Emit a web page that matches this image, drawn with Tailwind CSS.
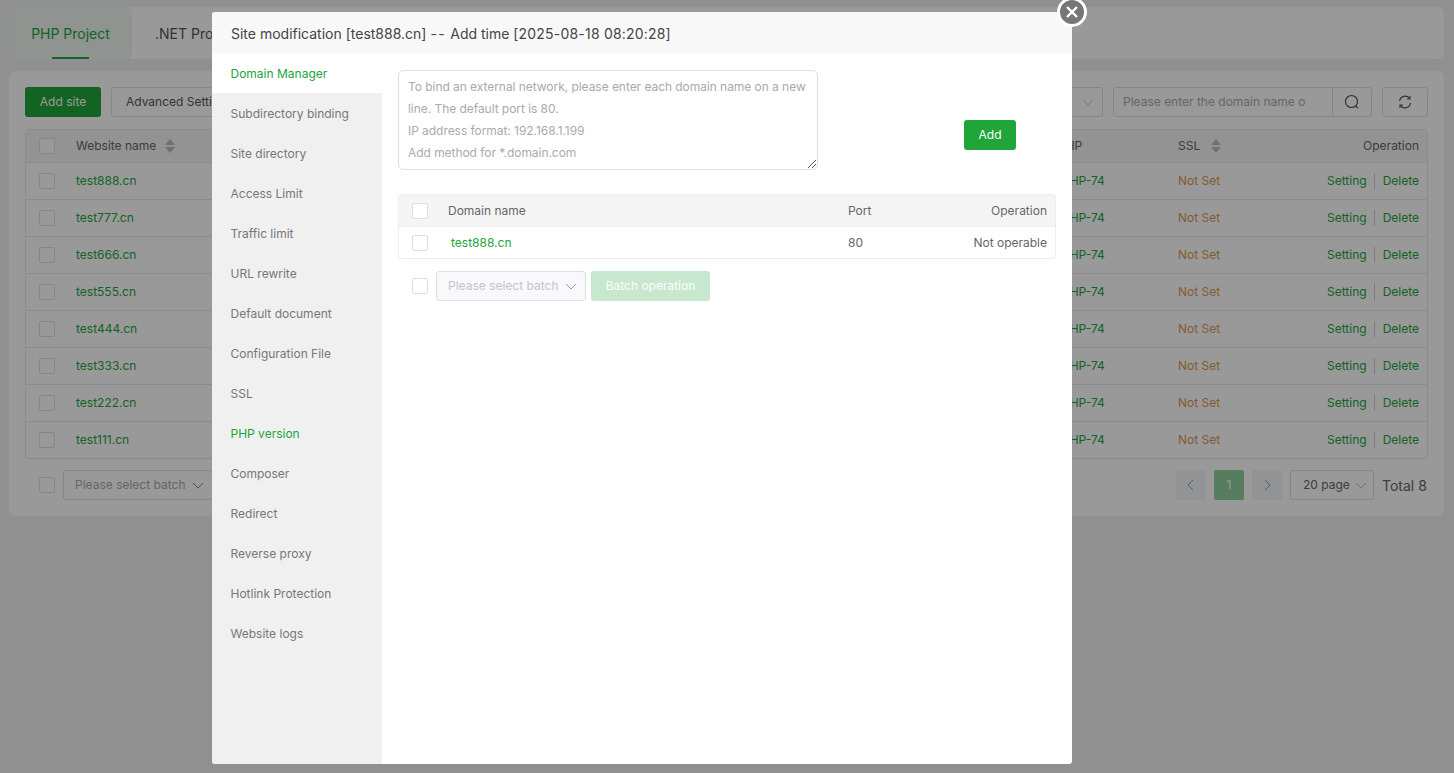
<!DOCTYPE html>
<html lang="en">
<head>
    <meta charset="UTF-8">
    <title>Website</title>
    <script src="https://cdn.jsdelivr.net/npm/@tailwindcss/browser@4"></script>
</head>
<body class="h-[773px] overflow-hidden bg-[#f0f0f0] font-['Inter','Liberation_Sans',sans-serif] text-[12px] text-[#666]">
    <!-- Page behind the dialog -->
    <div class="px-[9px] pt-[7px]">
        <div class="flex h-[52px] w-[1435px] rounded-md bg-white text-[14px]">
            <div class="relative flex w-[123px] items-center justify-center rounded-md bg-[#f0f7f1] text-[#20a53a]">
                PHP Project
                <span class="absolute bottom-0 left-[43px] h-[2px] w-[37px] bg-[#20a53a]"></span>
            </div>
            <div class="flex items-center pl-[23px] text-[#555]">.NET Project</div>
        </div>
        <div class="mt-[12px] h-[445px] w-[1435px] rounded-md bg-white px-[16px] pt-[16px]">
            <div class="flex h-[30px] items-center">
                <button class="h-[30px] w-[76px] rounded-[3px] bg-[#20a53a] text-white">Add site</button>
                <button class="ml-[10px] h-[30px] w-[130px] rounded-[3px] border border-[#dcdfe6] text-left pl-[14px] text-[#555]">Advanced Settings</button>
                <div class="ml-auto flex h-[30px] w-[30px] items-center justify-center rounded-r-[3px] border border-l-0 border-[#dcdfe6]">
                    <svg width="12" height="12" viewBox="0 0 12 12" fill="none" stroke="#c0c4cc"><path d="M1 4l5 5 5-5"/></svg>
                </div>
                <div class="ml-[10px] flex h-[30px] w-[259px] rounded-[3px] border border-[#dcdfe6]">
                    <div class="flex w-[218px] items-center whitespace-nowrap pl-[9px] text-[#aaa]">Please enter the domain name o</div>
                    <div class="flex flex-1 items-center justify-center border-l border-[#dcdfe6]">
                        <svg width="16" height="16" viewBox="0 0 16 16" fill="none" stroke="#555" stroke-width="1.2"><circle cx="7.5" cy="7.5" r="6"/><path d="M11.8 12l2.4 2.4"/></svg>
                    </div>
                </div>
                <div class="ml-[10px] flex h-[30px] w-[46px] items-center justify-center rounded-[3px] border border-[#dcdfe6]">
                    <svg width="14" height="14" viewBox="0 0 14 14" fill="none" stroke="#555" stroke-width="1.2"><path d="M1.6 6A5.5 5.5 0 0 1 11.6 3.6M12.4 8A5.5 5.5 0 0 1 2.4 10.4"/><path d="M12 1v3H9M2 13v-3h3"/></svg>
                </div>
            </div>
            <div id="sites" class="mt-[12px] rounded-[3px] border border-[#e8e8e8]">
                <div class="flex h-[32px] items-center bg-[#f5f5f5]">
                    <span class="ml-[13px] h-[16px] w-[16px] rounded-[2px] border border-[#dcdfe6] bg-white"></span>
                    <span class="ml-[21px] flex w-[982px] items-center gap-[9px]">Website name
                        <svg width="10" height="14" viewBox="0 0 10 14" fill="#bbb"><path d="M5 0l5 6H0zM5 14L0 8h10z"/></svg>
                    </span>
                    <span class="w-[120px]">PHP</span>
                    <span class="flex items-center gap-[11px]">SSL
                        <svg width="10" height="14" viewBox="0 0 10 14" fill="#bbb"><path d="M5 0l5 6H0zM5 14L0 8h10z"/></svg>
                    </span>
                    <span class="ml-auto pr-[8px]">Operation</span>
                </div>
            </div>
            <div class="mt-[11px] flex h-[30px] items-center">
                <span class="ml-[14px] h-[16px] w-[16px] rounded-[2px] border border-[#dcdfe6]"></span>
                <div class="ml-[8px] flex h-[30px] w-[150px] items-center gap-[7px] rounded-[3px] border border-[#dcdfe6] pl-[11px] text-[#aaa]">Please select batch
                    <svg width="12" height="12" viewBox="0 0 12 12" fill="none" stroke="#888"><path d="M1 4l5 5 5-5"/></svg>
                </div>
                <div class="ml-auto flex h-[30px] w-[30px] items-center justify-center rounded-[2px] bg-[#f4f5f7]">
                    <svg width="10" height="12" viewBox="0 0 10 12" fill="none" stroke="#999"><path d="M7 1L2 6l5 5"/></svg>
                </div>
                <div class="ml-[8px] flex h-[30px] w-[30px] items-center justify-center rounded-[2px] bg-[#8fd19c] text-white">1</div>
                <div class="ml-[8px] flex h-[30px] w-[30px] items-center justify-center rounded-[2px] bg-[#f4f5f7]">
                    <svg width="10" height="12" viewBox="0 0 10 12" fill="none" stroke="#999"><path d="M3 1l5 5-5 5"/></svg>
                </div>
                <div class="ml-[8px] flex h-[30px] w-[84px] items-center gap-[5px] rounded-[3px] border border-[#dcdfe6] pl-[12px]">20 page
                    <svg width="12" height="12" viewBox="0 0 12 12" fill="none" stroke="#bbb"><path d="M1 4l5 5 5-5"/></svg>
                </div>
                <span class="ml-[8px] w-[46px] whitespace-nowrap text-[14px]">Total 8</span>
            </div>
        </div>
    </div>

    <!-- Dialog -->
    <div class="fixed inset-0 bg-black/40"></div>
    <div class="fixed left-[212px] top-[12px] flex h-[752px] w-[860px] flex-col rounded-[3px] bg-white">
        <div class="flex h-[42px] shrink-0 items-center whitespace-pre rounded-t-[3px] bg-[#f8f8f8] pl-[19px] text-[14px] text-[#444]">Site modification [test888.cn] <span class="tracking-[1.5px]">--</span> Add time <span class="tracking-[0.2px]">[2025-08-18 08:20:28]</span></div>
        <button class="absolute right-[-15px] top-[-15px] flex h-[30px] w-[30px] items-center justify-center rounded-full border-[3px] border-white bg-[#777]">
            <svg width="14" height="14" viewBox="0 0 14 14" fill="none" stroke="white" stroke-width="2.4"><path d="M2 2l10 10M12 2L2 12"/></svg>
        </button>
        <div class="flex min-h-0 flex-1">
            <div id="menu" class="w-[170px] shrink-0 rounded-bl-[3px] bg-[#f0f0f0]"></div>
            <div class="flex-1 pl-[16px] pt-[16px]">
                <div class="flex items-center">
                    <div class="relative h-[100px] w-[420px] rounded-[5px] border border-[#dcdfe6] px-[9px] py-[5px] leading-[22px] tracking-[-0.05px] text-[#aaa]">
                        To bind an external network, please enter each domain name on a new<br>
                        line. The default port is 80.<br>
                        IP address format: 192.168.1.199<br>
                        Add method for *.domain.com
                        <svg class="absolute bottom-[1px] right-[1px]" width="8" height="8" viewBox="0 0 8 8" stroke="#555"><path d="M0 8l8-8M4 8l4-4"/></svg>
                    </div>
                    <button class="ml-[146px] mt-[29px] h-[30px] w-[52px] rounded-[3px] bg-[#20a53a] text-white">Add</button>
                </div>
                <div class="mt-[24px] w-[658px] rounded-[3px] border border-[#eee]">
                    <div class="flex h-[32px] items-center border-b border-[#eee] bg-[#f5f5f5]">
                        <span class="ml-[13px] h-[16px] w-[16px] rounded-[2px] border border-[#dcdfe6] bg-white"></span>
                        <span class="ml-[20px] w-[400px]">Domain name</span>
                        <span>Port</span>
                        <span class="ml-auto pr-[8px]">Operation</span>
                    </div>
                    <div class="flex h-[31px] items-center">
                        <span class="ml-[13px] h-[16px] w-[16px] rounded-[2px] border border-[#dcdfe6]"></span>
                        <span class="ml-[23px] w-[397px] text-[#20a53a]">test888.cn</span>
                        <span>80</span>
                        <span class="ml-auto pr-[8px]">Not operable</span>
                    </div>
                </div>
                <div class="mt-[12px] flex h-[30px] items-center">
                    <span class="ml-[14px] h-[16px] w-[16px] rounded-[2px] border border-[#dcdfe6]"></span>
                    <div class="ml-[8px] flex h-[30px] w-[150px] items-center gap-[7px] rounded-[3px] border border-[#dcdfe6] bg-[#f9f9fb] pl-[11px] text-[#c0c4cc]">Please select batch
                        <svg width="12" height="12" viewBox="0 0 12 12" fill="none" stroke="#999"><path d="M1 4l5 5 5-5"/></svg>
                    </div>
                    <button class="ml-[5px] h-[30px] w-[119px] rounded-[3px] bg-[#c7e8ce] text-white">Batch operation</button>
                </div>
            </div>
        </div>
    </div>

    <script>
        const sites = ["test888.cn", "test777.cn", "test666.cn", "test555.cn", "test444.cn", "test333.cn", "test222.cn", "test111.cn"];
        const menu = ["Domain Manager", "Subdirectory binding", "Site directory", "Access Limit", "Traffic limit", "URL rewrite", "Default document", "Configuration File", "SSL", "PHP version", "Composer", "Redirect", "Reverse proxy", "Hotlink Protection", "Website logs"];

        document.getElementById('sites').insertAdjacentHTML('beforeend', sites.map(name => `
            <div class="flex h-[37px] items-center border-t border-[#e8e8e8]">
                <span class="ml-[13px] h-[16px] w-[16px] rounded-[2px] border border-[#dcdfe6]"></span>
                <span class="ml-[21px] w-[986px] text-[#20a53a]">${name}</span>
                <span class="w-[116px] text-[#20a53a]">PHP-74</span>
                <span class="text-[#d99a4e]">Not Set</span>
                <span class="ml-auto flex items-center pb-[1px] pr-[8px] text-[#20a53a]">Setting<span class="ml-[7px] mr-[8px] h-[16px] w-px bg-[#ccc]"></span>Delete</span>
            </div>
        `).join(''));

        document.getElementById('menu').innerHTML = menu.map((item, index) => {
            if (index === 0) return `<div class="mb-[1px] flex h-[39px] items-center bg-white pl-[18.5px] text-[#20a53a]">${item}</div>`;
            if (item === "PHP version") return `<div class="flex h-[40px] items-center pl-[18.5px] text-[#20a53a]">${item}</div>`;
            return `<div class="flex h-[40px] items-center pl-[18.5px] text-[#777]">${item}</div>`;
        }).join('');
    </script>
</body>
</html>
